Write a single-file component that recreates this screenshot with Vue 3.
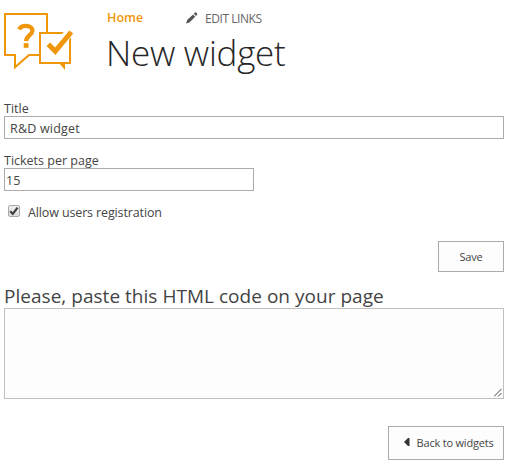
<script setup>
import { ref } from 'vue'

const title = ref('R&D widget')
const ticketsPerPage = ref('15')
const allowRegistration = ref(true)
const embedCode = ref('')
</script>

<template>
  <div class="page">
    <header class="header">
      <svg class="logo" width="70" height="58" viewBox="0 0 70 58" fill="none">
        <path d="M36 42H25L11 54.2V42H1V1H43V19" stroke="#f09609" stroke-width="2" />
        <path d="M36 20H66V50H36Z" fill="#fff" stroke="#f09609" stroke-width="2" />
        <path d="M55 50H61V57Z" fill="#f09609" />
        <path d="M15.3 16.4C16.3 13.8 18.6 12.9 21.7 12.9C26 12.9 28.4 14.9 28.4 17.8C28.4 22.2 22.3 22.4 22.2 28.1" stroke="#f09609" stroke-width="4.3" />
        <rect x="19.7" y="30.2" width="4.8" height="4.6" fill="#f09609" />
        <path d="M59 27L69.5 14" stroke="#fff" stroke-width="9" />
        <path d="M44.3 31.2L51.3 38.2L67.3 19" stroke="#f09609" stroke-width="5" />
      </svg>
      <div class="heading">
        <nav class="links">
          <a class="home">Home</a>
          <a class="edit">
            <svg class="pencil" width="12" height="12" viewBox="0 0 12 12" fill="#555">
              <path d="M0 11.5L1.2 8L7 2.4L9.3 4.7L3.4 10.4Z" />
              <path d="M7.8 1.7L9 .6Q9.7 0 10.4.7L11.1 1.4Q11.7 2 11.1 2.7L10 3.9Z" />
            </svg>
            <span class="edit-text">EDIT LINKS</span>
          </a>
        </nav>
        <h1>New widget</h1>
      </div>
    </header>

    <form class="form" @submit.prevent>
      <label class="label" for="title">Title</label>
      <input id="title" v-model="title" class="field title-field" type="text" />
      <label class="label tickets-label" for="tickets">Tickets per page</label>
      <input id="tickets" v-model="ticketsPerPage" class="field tickets-field" type="text" />
      <label class="check">
        <input v-model="allowRegistration" class="check-input" type="checkbox" />
        <span class="box">
          <svg v-if="allowRegistration" width="10" height="10" viewBox="0 0 10 10" fill="none">
            <path d="M1.2 5.2L3.8 7.8L8.6 1.6" stroke="#404040" stroke-width="2.2" />
          </svg>
        </span>
        <span class="check-text">Allow users registration</span>
      </label>
      <button class="button save" type="button"><span>Save</span></button>
    </form>

    <h2><span>Please, paste this HTML code on your page</span></h2>
    <div class="code-wrap">
      <textarea v-model="embedCode" class="code"></textarea>
      <svg class="grip" width="8" height="8" viewBox="0 0 8 8" stroke="#444" stroke-width="1">
        <path d="M0 7.5L7.5 0M4 7.5L7.5 4" />
      </svg>
    </div>
    <button class="button back" type="button">
      <svg width="6" height="8" viewBox="0 0 6 8" fill="#333"><path d="M0 4L4 0H5.5V8H4Z" /></svg>
      <span class="back-text">Back to widgets</span>
    </button>
  </div>
</template>

<style>
body {
  background: #fff;
}
</style>

<style scoped>
.page {
  box-sizing: border-box;
  width: 518px;
  height: 472px;
  padding: 0 14px 0 4px;
  display: flex;
  flex-direction: column;
  overflow: hidden;
  font-family: "Open Sans", "Noto Sans", sans-serif;
  font-size: 12.5px;
  color: #444;
  white-space: nowrap;
}
.header {
  display: flex;
  height: 100px;
}
.logo {
  flex: none;
  margin-top: 13px;
}
.heading {
  margin-left: 33px;
}
.links {
  display: flex;
  height: 18px;
  padding-top: 9px;
  line-height: 18px;
}
.home {
  width: 79px;
  font-size: 12.5px;
  font-weight: 600;
  color: #f09609;
}
.edit {
  display: flex;
  color: #666;
}
.pencil {
  margin-top: 3px;
}
.edit-text {
  margin-left: 7px;
  padding-top: 1px;
  font-size: 12px;
  letter-spacing: -0.45px;
}
h1 {
  margin: 0 0 0 -1px;
  font-size: 35px;
  font-weight: 300;
  line-height: 52px;
  letter-spacing: -0.25px;
  color: #262626;
}
.form {
  display: flex;
  flex-direction: column;
  height: 184px;
}
.label {
  height: 16px;
  line-height: 18px;
}
.field {
  box-sizing: border-box;
  height: 23px;
  margin: 0;
  border: 1px solid #ababab;
  border-radius: 0;
  background: #fff;
  font: inherit;
  color: #444;
  outline: none;
}
.title-field {
  width: 500px;
  padding: 1px 5px 0;
  letter-spacing: 0.2px;
}
.tickets-label {
  margin-top: 13px;
}
.tickets-field {
  width: 250px;
  padding: 1px 1px 0;
}
.check {
  display: flex;
  height: 18px;
  margin-top: 12px;
  padding-left: 4px;
  line-height: 20px;
}
.check-input {
  position: absolute;
  opacity: 0;
}
.box {
  box-sizing: border-box;
  display: grid;
  place-items: center;
  width: 12px;
  height: 12px;
  margin-top: 2px;
  border: 1px solid #aaa;
  border-radius: 2px;
  background: linear-gradient(#eee, #ddd);
}
.check-text {
  margin-left: 8px;
  letter-spacing: -0.13px;
}
.button {
  box-sizing: border-box;
  display: flex;
  align-items: center;
  justify-content: center;
  align-self: flex-end;
  padding: 0;
  border: 1px solid #ababab;
  border-radius: 0;
  background: #fdfdfd;
  font: inherit;
  font-size: 11px;
  letter-spacing: -0.2px;
  color: #444;
}
.save {
  width: 66px;
  height: 31px;
  margin-top: 20px;
}
h2 {
  height: 24px;
  margin: 0;
  font-size: 19px;
  font-weight: 400;
  line-height: 24px;
  letter-spacing: 0.03px;
  color: #444;
}
.code-wrap {
  position: relative;
  height: 91px;
}
.code {
  box-sizing: border-box;
  display: block;
  width: 500px;
  height: 91px;
  margin: 0;
  border: 1px solid #c0c0c0;
  background: #fdfdfd;
  resize: none;
  outline: none;
}
.grip {
  position: absolute;
  right: 2px;
  bottom: 2px;
}
.back {
  width: 116px;
  height: 34px;
  margin-top: 27px;
  padding: 0 0 2px 5px;
}
.back-text {
  margin-left: 7px;
}
</style>
